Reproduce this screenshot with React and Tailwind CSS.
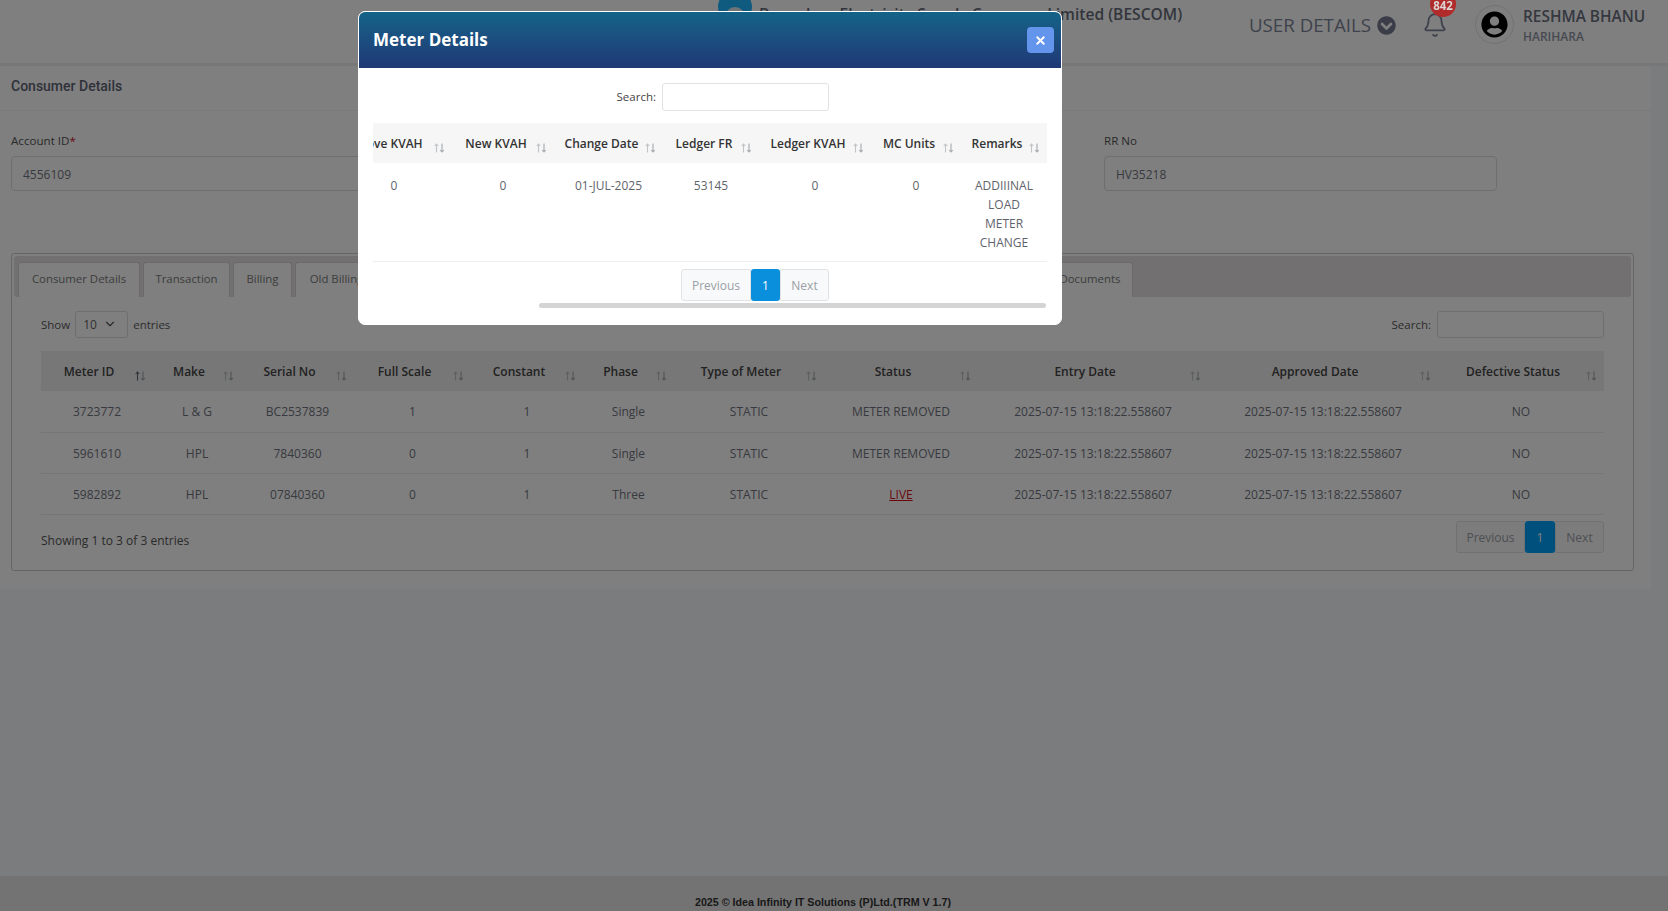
import React from 'react';
import { Bell, X, ChevronDown } from 'lucide-react';
import { FaChevronCircleDown, FaUserCircle } from 'react-icons/fa';

const meterCols = [
  ['Meter ID', 'w-[112px]'],
  ['Make', 'w-[88px]'],
  ['Serial No', 'w-[113px]'],
  ['Full Scale', 'w-[117px]'],
  ['Constant', 'w-[112px]'],
  ['Phase', 'w-[91px]'],
  ['Type of Meter', 'w-[150px]'],
  ['Status', 'w-[154px]'],
  ['Entry Date', 'w-[230px]'],
  ['Approved Date', 'w-[230px]'],
  ['Defective Status', 'w-[166px]'],
];

const meterRows = [
  ['3723772', 'L & G', 'BC2537839', '1', '1', 'Single', 'STATIC', 'METER REMOVED'],
  ['5961610', 'HPL', '7840360', '0', '1', 'Single', 'STATIC', 'METER REMOVED'],
  ['5982892', 'HPL', '07840360', '0', '1', 'Three', 'STATIC', 'LIVE'],
];

const modalCols = [
  ['Above KVAH', 'w-[116px]', '0'],
  ['New KVAH', 'w-[102px]', '0'],
  ['Change Date', 'w-[109px]', '01-JUL-2025'],
  ['Ledger FR', 'w-[96px]', '53145'],
  ['Ledger KVAH', 'w-[112px]', '0'],
  ['MC Units', 'w-[90px]', '0'],
  ['Remarks', 'w-[86px]', 'ADDIIINAL LOAD METER CHANGE'],
];

const tabs = [
  ['Consumer Details', 'w-[122px]'],
  ['Transaction', 'w-[87px]'],
  ['Billing', 'w-[59px]'],
  ['Old Billing', 'w-[83px]'],
];

function SortIcon({ active }) {
  return (
    <svg width="11" height="10" viewBox="0 0 11 10" fill="none" className="absolute right-[7px] top-[20px]">
      <path d="M2.5 9.5V1M.7 3 2.5 1l1.8 2" stroke="#5f6b73" strokeWidth="1.1" opacity={active ? 1 : 0.35} />
      <path d="M8 .5V9M6.2 7 8 9l1.8-2" stroke="#5f6b73" strokeWidth="1.1" opacity="0.55" />
    </svg>
  );
}

function Pager({ prev, one, next, activeBg }) {
  return (
    <div className="flex h-[32px] text-[12px]">
      <span className={`${prev} flex items-center justify-center rounded-l-[3px] border border-[#e0e2e4] bg-[#f8f9fa] pt-[2px] text-[#9aa0a6]`}>Previous</span>
      <span className={`${one} ${activeBg} flex items-center justify-center rounded-[3px] pt-[2px] text-white`}>1</span>
      <span className={`${next} flex items-center justify-center rounded-r-[3px] border border-[#e0e2e4] bg-[#f8f9fa] pt-[2px] text-[#9aa0a6]`}>Next</span>
    </div>
  );
}

function Tab({ label, w }) {
  return (
    <div className={`${w} flex h-[35px] shrink-0 items-center justify-center whitespace-nowrap rounded-t-[3px] border border-b-0 border-[#d4d4d4] bg-white pb-[3px] text-[#7a7a7a]`}>
      {label}
    </div>
  );
}

function TopBar() {
  return (
    <header className="flex h-[63px] shrink-0 items-start bg-white pl-[718px] text-[#7a8299] shadow-[0_3px_0_#eeeeee]">
      <div className="relative -mt-[10px] h-[34px] w-[34px] shrink-0 rounded-full bg-[#1eb4ff]">
        <div className="mx-auto mt-[17px] h-[20px] w-[20px] rounded-full bg-[#dfe8ee]" />
      </div>
      <div className="ml-[7px] w-[423px] whitespace-nowrap pt-[3px] text-[15.6px] font-semibold leading-[22px] text-[#666b78]">
        Bangalore Electricity Supply Company Limited (BESCOM)
      </div>
      <div className="ml-[67px] flex w-[146px] items-center pt-[11px]">
        <span className="whitespace-nowrap text-[18.7px] leading-[28px] text-[#7c8498]">USER DETAILS</span>
        <FaChevronCircleDown className="ml-[6px] shrink-0 text-[19px] text-[#747a90]" />
      </div>
      <div className="relative ml-[29px] mt-[12px] w-[22px]">
        <Bell size={26} strokeWidth={1.6} className="-ml-[2px] text-[#7a8299]" />
        <span className="absolute -top-[21px] left-[6px] z-50 flex h-[26px] w-[26px] items-center justify-center rounded-full bg-[#b12b2b] pt-[4px] text-[11.5px] font-bold text-[#dcd4d4]">842</span>
      </div>
      <div className="ml-[29px] mt-[5px] flex h-[39px] w-[39px] items-center justify-center rounded-full border border-[#e4e4e4]">
        <FaUserCircle className="text-[27px] text-black" />
      </div>
      <div className="ml-[9px] whitespace-nowrap pt-[5px]">
        <div className="text-[15.4px] font-semibold leading-[23px] text-[#6b7080]">RESHMA BHANU</div>
        <div className="text-[12px] font-semibold leading-[17px] text-[#8f94a4]">HARIHARA</div>
      </div>
    </header>
  );
}

function MeterTable() {
  return (
    <table className="w-[1563px] table-fixed border-collapse text-[12px]">
      <thead>
        <tr className="h-[40px] bg-[#eeeeee]">
          {meterCols.map(([label, w], i) => (
            <th key={label} className={`${w} relative whitespace-nowrap pl-[10px] pr-[26px] pt-[1px] text-center font-semibold text-[#444444]`}>
              {label}
              <SortIcon active={i === 0} />
            </th>
          ))}
        </tr>
      </thead>
      <tbody className="text-[#6f7480]">
        {meterRows.map((row) => (
          <tr key={row[0]} className="h-[41px] border-b border-[#ececec] text-center">
            {row.map((cell, i) => (
              <td key={i} className="pt-[2px]">
                {cell === 'LIVE' ? <span className="text-[#d80f16] underline">LIVE</span> : cell}
              </td>
            ))}
            <td className="pt-[2px]">2025-07-15 13:18:22.558607</td>
            <td className="pt-[2px]">2025-07-15 13:18:22.558607</td>
            <td className="pt-[2px]">NO</td>
          </tr>
        ))}
      </tbody>
    </table>
  );
}

function MeterModal() {
  return (
    <div className="absolute left-[358px] top-[11px] z-50 h-[314px] w-[704px] overflow-hidden rounded-[7px] border border-white bg-white">
      <div className="flex h-[56px] items-center justify-between bg-gradient-to-b from-[#136388] to-[#1f3876] pl-[14px] pr-[7px]">
        <h2 className="pb-[1px] text-[17px] font-bold text-white">Meter Details</h2>
        <button className="flex h-[26px] w-[27px] items-center justify-center rounded-[4px] bg-[#6495ed] text-white">
          <X size={13} strokeWidth={3.5} />
        </button>
      </div>
      <div className="px-[14px]">
        <div className="flex items-center justify-end pr-[218px] pt-[15px] text-[11.5px] text-[#444444]">
          <label>Search:</label>
          <input className="ml-[6px] h-[28px] w-[167px] rounded-[3px] border border-[#e2e2e2]" />
        </div>
        <div className="mt-[12px] overflow-hidden">
          <table className="-ml-[37px] w-[711px] table-fixed border-collapse text-[12px]">
            <thead>
              <tr className="h-[40px] bg-[#f6f6f6]">
                {modalCols.map(([label, w]) => (
                  <th key={label} className={`${w} relative whitespace-nowrap pl-[10px] pr-[24px] pt-[2px] text-center font-semibold text-[#333333]`}>
                    {label}
                    <SortIcon />
                  </th>
                ))}
              </tr>
            </thead>
            <tbody>
              <tr className="h-[98px] border-b border-[#eeeeee] text-center leading-[19px] text-[#5f646c]">
                {modalCols.map(([label, , value]) => (
                  <td key={label} className="px-[12px] pt-[13px] align-top">{value}</td>
                ))}
              </tr>
            </tbody>
          </table>
        </div>
        <div className="mt-[7px] flex justify-end pr-[218px]">
          <Pager prev="w-[70px]" one="w-[29px]" next="w-[49px]" activeBg="bg-[#0a8fdc]" />
        </div>
        <div className="ml-[166px] mt-[2px] h-[5px] w-[507px] rounded-full bg-[#d4d4d4]" />
      </div>
    </div>
  );
}

export default function App() {
  return (
    <div className="relative flex h-screen flex-col overflow-hidden bg-[#f6f8fa] [font-family:Open_Sans,sans-serif]">
      <TopBar />

      <main className="mt-[3px] h-[523px] w-[1651px] shrink-0 bg-white">
        <div className="flex h-[45px] items-center border-b border-[#f2f2f2] pb-[3px] pl-[11px] [font-family:Roboto,sans-serif] text-[14px] font-medium text-[#5f6475]">
          Consumer Details
        </div>
        <div className="grid grid-cols-[393px_393px_393px] gap-x-[153.5px] px-[11px] pt-[21px] text-[11.6px]">
          <div>
            <label className="block h-[24px] leading-[17px] text-[#555555]">Account ID<span className="text-[#d0102a]">*</span></label>
            <input readOnly defaultValue="4556109" className="h-[35px] w-full rounded-[4px] border border-[#dddddd] px-[11px] pt-[2px] text-[12px] text-[#6f7480]" />
          </div>
          <div />
          <div>
            <label className="block h-[24px] leading-[17px] text-[#555555]">RR No</label>
            <input readOnly defaultValue="HV35218" className="h-[35px] w-full rounded-[4px] border border-[#dddddd] px-[11px] pt-[2px] text-[12px] text-[#6f7480]" />
          </div>
        </div>

        <section className="ml-[11px] mt-[62px] h-[318px] w-[1623px] rounded-[3px] border border-[#cccccc] px-[2px] pt-[2px]">
          <div className="flex h-[41px] items-end gap-[3px] rounded-[3px] bg-[#e4e0e0] pl-[4px] text-[11.4px]">
            {tabs.map(([label, w]) => (
              <Tab key={label} label={label} w={w} />
            ))}
            <div className="w-[663px] shrink-0" />
            <Tab label="Documents" w="w-[86px]" />
          </div>
          <div className="px-[27px] pt-[14px]">
            <div className="flex h-[27px] items-center justify-between text-[11.5px] text-[#5a5a5a]">
              <div className="flex items-center">
                <span>Show</span>
                <div className="relative ml-[5px] h-[27px] w-[53px]">
                  <select className="h-full w-full appearance-none rounded-[3px] border border-[#dddddd] pl-[7px] text-[12px] text-[#666666]">
                    <option>10</option>
                  </select>
                  <ChevronDown size={14} className="absolute right-[11px] top-[6px] text-[#555555]" />
                </div>
                <span className="ml-[5px]">entries</span>
              </div>
              <div className="flex items-center">
                <label>Search:</label>
                <input className="ml-[6px] h-[27px] w-[167px] rounded-[3px] border border-[#dddddd]" />
              </div>
            </div>
            <div className="mt-[13px]">
              <MeterTable />
            </div>
            <div className="mt-[6px] flex items-start justify-between">
              <span className="pt-[11px] text-[12px] text-[#555555]">Showing 1 to 3 of 3 entries</span>
              <Pager prev="w-[69px]" one="w-[30px]" next="w-[49px]" activeBg="bg-[#00a0fa]" />
            </div>
          </div>
        </section>
      </main>

      <footer className="mt-auto flex h-[35px] shrink-0 items-end justify-center bg-[#e6e6e6] pb-[1px] pr-[22px] [font-family:Liberation_Sans,sans-serif] text-[10.7px] font-bold text-[#333333]">
        2025 © Idea Infinity IT Solutions (P)Ltd.(TRM V 1.7)
      </footer>

      <div className="fixed inset-0 z-40 bg-black/50" />
      <MeterModal />
    </div>
  );
}
